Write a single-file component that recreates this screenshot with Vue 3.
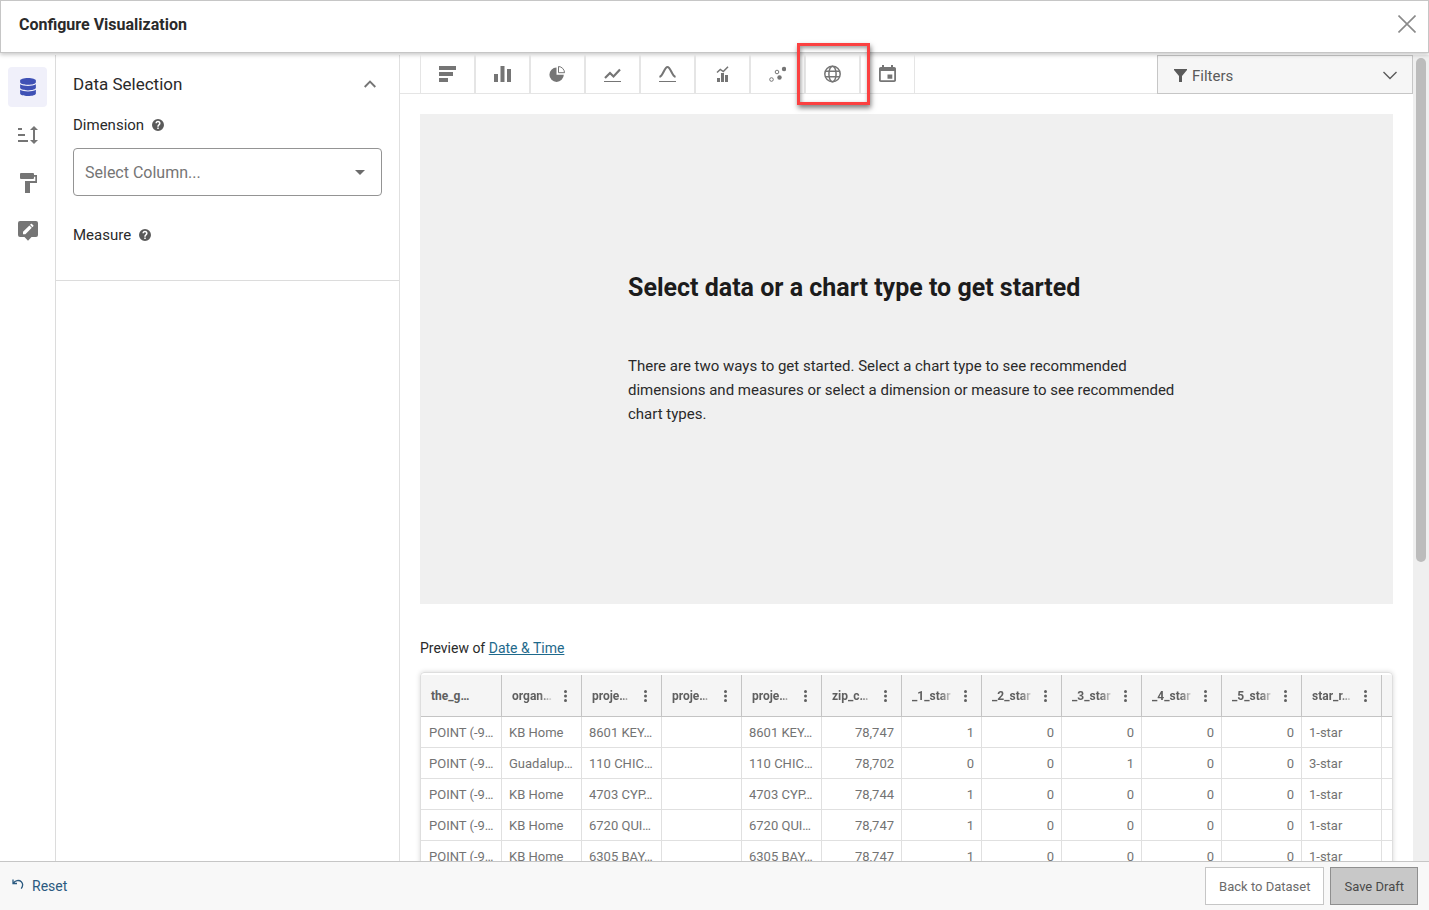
<script setup>
import { ref } from 'vue'

const column = ref('')

const railItems = [
  { id: 'data', label: 'Data Selection', active: true },
  { id: 'sort', label: 'Sort and limit' },
  { id: 'paint', label: 'Presentation' },
  { id: 'note', label: 'Annotations' }
]

const chartTypes = [
  { id: 'bar', label: 'Bar chart' },
  { id: 'column', label: 'Column chart' },
  { id: 'pie', label: 'Pie chart' },
  { id: 'line', label: 'Timeline chart' },
  { id: 'histogram', label: 'Histogram' },
  { id: 'combo', label: 'Combo chart' },
  { id: 'scatter', label: 'Scatter chart' },
  { id: 'map', label: 'Map' },
  { id: 'calendar', label: 'Calendar' }
]

const headers = ['the_g…', 'organ…', 'proje…', 'proje…', 'proje…', 'zip_c…', '_1_star', '_2_star', '_3_star', '_4_star', '_5_star', 'star_r…']

const rows = [
  ['POINT (-9…', 'KB Home', '8601 KEY…', '', '8601 KEY…', '78,747', '1', '0', '0', '0', '0', '1-star'],
  ['POINT (-9…', 'Guadalup…', '110 CHIC…', '', '110 CHIC…', '78,702', '0', '0', '1', '0', '0', '3-star'],
  ['POINT (-9…', 'KB Home', '4703 CYP…', '', '4703 CYP…', '78,744', '1', '0', '0', '0', '0', '1-star'],
  ['POINT (-9…', 'KB Home', '6720 QUI…', '', '6720 QUI…', '78,747', '1', '0', '0', '0', '0', '1-star'],
  ['POINT (-9…', 'KB Home', '6305 BAY…', '', '6305 BAY…', '78,747', '1', '0', '0', '0', '0', '1-star']
]

const isNumeric = (i) => i >= 5 && i <= 10
</script>

<template>
  <div class="shell">
    <header class="topbar">
      <h1>Configure Visualization</h1>
      <button class="close" type="button" aria-label="Close">
        <svg width="18" height="18" viewBox="0 0 18 18"><path d="M.5.5l17 17M17.5.5l-17 17" fill="none" stroke="#8a8a8a" stroke-width="1.6" /></svg>
      </button>
    </header>

    <div class="body">
      <nav class="rail" aria-label="Configuration sections">
        <button v-for="item in railItems" :key="item.id" type="button" class="rail-btn" :class="{ active: item.active }" :aria-label="item.label">
          <svg v-if="item.id === 'data'" width="16" height="18" viewBox="0 0 448 512"><path fill="#3f51b5" d="M448 73v46c0 40-100 73-224 73S0 159 0 119V73C0 33 100 0 224 0s224 33 224 73zM448 176v103c0 40-100 73-224 73S0 319 0 279V176c48 33 136 49 224 49s176-16 224-49zm0 160v103c0 40-100 73-224 73S0 479 0 439V336c48 33 136 49 224 49s176-16 224-49z" /></svg>
          <svg v-else-if="item.id === 'sort'" width="20" height="18" viewBox="0 0 20 18"><path fill="#757575" d="M0 2h4v2H0zM0 8h7v2H0zM0 14h10v2H0zM16 0l4 4h-3v10h3l-4 4-4-4h3V4h-3z" /></svg>
          <svg v-else-if="item.id === 'paint'" width="18" height="20" viewBox="0 0 18 20"><path fill="#757575" d="M2 0h12a1 1 0 0 1 1 1v1h3v8h-7v10H6V8h10.300V3.700H15V5a1 1 0 0 1-1 1H2a1 1 0 0 1-1-1V1a1 1 0 0 1 1-1z" /></svg>
          <svg v-else width="20" height="20" viewBox="0 0 20 20"><path fill="#757575" d="M2 0h16a2 2 0 0 1 2 2v12a2 2 0 0 1-2 2h-4.500L10 19.700 6.500 16H2a2 2 0 0 1-2-2V2a2 2 0 0 1 2-2z" /><path fill="#fff" d="M5 13.200v-2.400l6.400-6.400 2.400 2.400-6.400 6.400zM12 3.800l.9-.9c.3-.3.7-.3 1 0l1.400 1.400c.3.300.3.700 0 1l-.9.900z" /></svg>
        </button>
      </nav>

      <aside class="panel">
        <section class="section">
          <button class="section-head" type="button" aria-expanded="true">
            <span>Data Selection</span>
            <svg width="12" height="8" viewBox="0 0 12 8"><path d="M.7 7L6 1.700 11.300 7" fill="none" stroke="#757575" stroke-width="1.900" /></svg>
          </button>
          <div class="field-label">
            <label for="dimension">Dimension</label>
            <svg width="12" height="12" viewBox="0 0 24 24"><path fill="#5a5a5a" d="M12 0a12 12 0 1 0 0 24 12 12 0 0 0 0-24zm1.500 20h-3v-3h3zm2.600-8.700l-1.100 1.100c-1 1-1.500 1.600-1.500 3.100h-3v-.7c0-1.300.5-2.400 1.500-3.300l1.400-1.500c.4-.4.600-.9.600-1.400a2 2 0 0 0-4.200 0H6.900a5.100 5.100 0 0 1 10.200 0c0 1.100-.4 2-1 2.700z" /></svg>
          </div>
          <div class="select-wrap">
            <select id="dimension" v-model="column">
              <option value="">Select Column...</option>
            </select>
            <svg class="caret" width="10" height="5" viewBox="0 0 10 5"><path d="M0 0h10L5 5z" fill="#6b6b6b" /></svg>
          </div>
          <div class="field-label measure">
            <span>Measure</span>
            <svg width="12" height="12" viewBox="0 0 24 24"><path fill="#5a5a5a" d="M12 0a12 12 0 1 0 0 24 12 12 0 0 0 0-24zm1.500 20h-3v-3h3zm2.600-8.700l-1.100 1.100c-1 1-1.500 1.600-1.500 3.100h-3v-.7c0-1.300.5-2.400 1.500-3.300l1.400-1.500c.4-.4.600-.9.600-1.400a2 2 0 0 0-4.200 0H6.900a5.100 5.100 0 0 1 10.200 0c0 1.100-.4 2-1 2.700z" /></svg>
          </div>
        </section>
      </aside>

      <main class="main">
        <div class="toolbar">
          <div class="types">
            <button v-for="t in chartTypes" :key="t.id" type="button" class="type" :aria-label="t.label">
              <svg width="17" height="18" viewBox="0 0 17 18" fill="#757575">
                <path v-if="t.id === 'bar'" d="M0 1h17v4H0zM0 7h14v4H0zM0 13h9v4H0z" />
                <path v-else-if="t.id === 'column'" d="M0 9h4v8H0zM6.500 1h4v16h-4zM13 4h4v13h-4z" />
                <g v-else-if="t.id === 'pie'"><path d="M7.500 2.500A7.200 7.200 0 1 0 14.800 9.800H7.500z" /><path d="M9.500 1.500a6.300 6.300 0 0 1 6 6.200h-6z" fill="none" stroke="#757575" /></g>
                <g v-else-if="t.id === 'line'" fill="none" stroke="#757575"><path d="M1 13l5-5 3.500 3.500L16 4.500" stroke-width="2.200" /><path d="M0 16.500h17" /></g>
                <g v-else-if="t.id === 'histogram'" fill="none" stroke="#757575"><path d="M.5 12C4 11 5.500 2 8.500 2s4.500 9 8 10" stroke-width="2.200" /><path d="M0 16.500h17" /></g>
                <g v-else-if="t.id === 'combo'"><path d="M3 13h3v4H3zM7 8h3v9H7zM11 10h3v7h-3z" /><path d="M3 7.500L6.300 4.500l3 2L14 1.700" fill="none" stroke="#757575" stroke-width="1.500" /></g>
                <g v-else-if="t.id === 'scatter'"><circle cx="2.500" cy="14.500" r="1.800" fill="none" stroke="#757575" /><circle cx="8" cy="7" r="1.800" fill="none" stroke="#757575" /><circle cx="10.500" cy="12.500" r="2.200" /><circle cx="15" cy="4" r="2.200" /></g>
                <g v-else-if="t.id === 'map'" fill="none" stroke="#757575" stroke-width="1.500"><circle cx="8.500" cy="9" r="7.700" /><ellipse cx="8.500" cy="9" rx="3.600" ry="7.700" /><path d="M1.500 6.300h14M1.500 11.700h14" /></g>
                <path v-else fill-rule="evenodd" d="M15.200 2H14V0h-2v2H5V0H3v2H1.800C.8 2 0 2.800 0 3.700v11.600c0 .9.800 1.700 1.800 1.700h13.400c1 0 1.800-.8 1.800-1.700V3.700c0-.9-.8-1.700-1.800-1.700zM1.800 6h13.400v9.300H1.800zM8.500 9.500h4.800v4.200H8.500z" />
              </svg>
              <span v-if="t.id === 'map'" class="highlight"></span>
            </button>
          </div>
          <button class="filters" type="button">
            <svg width="13" height="13" viewBox="0 0 13 13"><path d="M0 0h13v1L8 7v6H5V7L0 1z" fill="#5a5a5a" /></svg>
            <span>Filters</span>
            <svg class="chev" width="14" height="9" viewBox="0 0 14 9"><path d="M.5 1L7 7.500 13.500 1" fill="none" stroke="#5a5a5a" stroke-width="1.400" /></svg>
          </button>
        </div>

        <div class="content">
          <section class="intro">
            <div class="intro-text">
              <h2>Select data or a chart type to get started</h2>
              <p>There are two ways to get started. Select a chart type to see recommended dimensions and measures or select a dimension or measure to see recommended chart types.</p>
            </div>
          </section>
          <p class="preview">Preview of <a href="#">Date &amp; Time</a></p>
          <div class="card">
            <table>
              <thead>
                <tr>
                  <th v-for="(h, i) in headers" :key="i" scope="col">
                    <div class="th">
                      <span :class="{ fade: i > 0 }">{{ h }}</span>
                      <svg v-if="i > 0" width="3" height="12" viewBox="0 0 3 12" fill="#5f5f5f"><circle cx="1.500" cy="1.500" r="1.500" /><circle cx="1.500" cy="6" r="1.500" /><circle cx="1.500" cy="10.500" r="1.500" /></svg>
                    </div>
                  </th>
                  <td class="rest"></td>
                </tr>
              </thead>
              <tbody>
                <tr v-for="(r, ri) in rows" :key="ri">
                  <td v-for="(c, ci) in r" :key="ci" :class="{ num: isNumeric(ci) }">{{ c }}</td>
                  <td class="rest"></td>
                </tr>
              </tbody>
            </table>
          </div>
        </div>
      </main>

      <div class="track"><div class="thumb"></div></div>
    </div>

    <footer class="footer">
      <button class="reset" type="button">
        <svg width="12" height="14" viewBox="0 0 12 14" fill="none" stroke="#2b5a80" stroke-width="1.300"><path d="M1 .500v4h4M1.300 4.300C3 1.500 7 .5 9.300 2.700c2 2 1.600 4.500-.1 7" /></svg>
        Reset
      </button>
      <div class="actions">
        <button class="btn" type="button">Back to Dataset</button>
        <button class="btn primary" type="button">Save Draft</button>
      </div>
    </footer>
  </div>
</template>

<style>
html,
body {
  margin: 0;
  background: #fff;
}
</style>

<style scoped>
* {
  box-sizing: border-box;
}
.shell {
  display: flex;
  flex-direction: column;
  height: 100vh;
  overflow: hidden;
  font-family: Roboto, "Liberation Sans", sans-serif;
  color: #2a2a2a;
}
button {
  font-family: inherit;
  color: inherit;
  background: none;
  border: 0;
  padding: 0;
  cursor: pointer;
}
svg {
  display: block;
  flex: none;
}
.topbar {
  display: flex;
  flex: none;
  align-items: center;
  justify-content: space-between;
  height: 53px;
  padding: 0 12px 4px 18px;
  border: 1px solid #c6c6c6;
  background: #fff;
  box-shadow: 0 2px 4px rgba(0, 0, 0, 0.2);
  position: relative;
}
.close {
  padding-bottom: 2px;
}
h1 {
  margin: 0;
  font-size: 16px;
  line-height: 24px;
  font-weight: 700;
}
.body {
  display: flex;
  flex: 1;
  min-height: 0;
  padding-top: 2px;
}
.rail {
  display: flex;
  flex: none;
  flex-direction: column;
  gap: 8px;
  width: 56px;
  padding: 12px 8px;
  border-right: 1px solid #dcdcdc;
}
.rail-btn {
  display: flex;
  align-items: center;
  justify-content: center;
  width: 100%;
  height: 40px;
  border-radius: 4px;
}
.rail-btn.active {
  background: #f0f0fa;
}
.panel {
  flex: none;
  width: 344px;
  border-right: 1px solid #e0e0e0;
}
.section {
  padding: 16px 17px 33px;
  border-bottom: 1px solid #dcdcdc;
}
.section-head {
  display: flex;
  align-items: center;
  justify-content: space-between;
  width: 100%;
  padding-right: 6px;
  font-size: 17px;
  line-height: 26px;
}
.field-label {
  display: flex;
  align-items: center;
  gap: 8px;
  margin-top: 16px;
  font-size: 15px;
  line-height: 24px;
}
.field-label.measure {
  margin-top: 27px;
}
.select-wrap {
  position: relative;
  margin-top: 11px;
}
select {
  appearance: none;
  display: block;
  width: 100%;
  height: 48px;
  padding: 0 11px;
  border: 1px solid #949494;
  border-radius: 4px;
  background: #fff;
  color: #757575;
  font-family: inherit;
  font-size: 16px;
}
.caret {
  position: absolute;
  right: 17px;
  top: 22px;
  pointer-events: none;
}
.main {
  display: flex;
  flex: 1;
  flex-direction: column;
  min-width: 0;
}
.toolbar {
  display: flex;
  flex: none;
  justify-content: space-between;
  height: 39px;
  padding-left: 20px;
  border-bottom: 1px solid #e5e5e5;
}
.types {
  display: flex;
}
.type {
  position: relative;
  display: flex;
  align-items: center;
  justify-content: center;
  width: 55px;
  height: 38px;
  border: solid #e5e5e5;
  border-width: 0 1px;
}
.highlight {
  position: absolute;
  z-index: 2;
  inset: -12px -11px -12px -9px;
  border: 3px solid #fb4141;
  box-shadow: 1px 3px 5px rgba(0, 0, 0, 0.5), inset 1px 2px 4px rgba(0, 0, 0, 0.4);
}
.filters {
  display: flex;
  align-items: center;
  gap: 5px;
  width: 256px;
  height: 39px;
  padding: 2px 15px 0 16px;
  border: 1px solid #c6c6c6;
  background: #f6f6f6;
  color: #5a5a5a;
  font-size: 15px;
}
.chev {
  margin-left: auto;
}
.content {
  flex: 1;
  min-height: 0;
  padding: 20px 20px 0;
  overflow: hidden;
}
.intro {
  display: flex;
  justify-content: center;
  height: 490px;
  padding-top: 156px;
  background: #f0f0f0;
}
.intro-text {
  width: 557px;
}
h2 {
  margin: 0;
  font-size: 25px;
  line-height: 36px;
  font-weight: 700;
  color: #1c1c1c;
}
.intro p {
  margin: 48px 0 0;
  font-size: 15px;
  line-height: 24px;
}
.preview {
  margin: 32px 0 12px;
  font-size: 14px;
  line-height: 24px;
}
.preview a {
  color: #1f6a8c;
}
.card {
  padding: 2px 0 0;
  border: 1px solid #dedede;
  border-radius: 4px;
  box-shadow: 0 0 5px rgba(0, 0, 0, 0.16);
}
table {
  width: 100%;
  table-layout: fixed;
  border-collapse: separate;
  border-spacing: 0;
  color: #737373;
  font-size: 13px;
}
th {
  width: 80px;
  height: 42px;
  padding: 0 14px 0 10px;
  border: solid #c4c4c4;
  border-width: 0 1px 1px 0;
  background: #f5f5f5;
  text-align: left;
  font-weight: 700;
  font-size: 12px;
  color: #5f5f5f;
}
th:first-child {
  width: 81px;
}
.th {
  display: flex;
  align-items: center;
  justify-content: space-between;
}
.fade {
  width: 41px;
  overflow: hidden;
  white-space: nowrap;
  mask-image: linear-gradient(to right, #000 28px, transparent 42px);
}
td {
  height: 31px;
  padding: 0 7px;
  overflow: hidden;
  white-space: nowrap;
  border: solid #e0e0e0;
  border-width: 0 1px 1px 0;
}
td:first-child {
  padding-left: 8px;
}
td.num {
  text-align: right;
}
td.rest {
  padding: 0;
  border-right: 0;
}
thead td.rest {
  border-bottom-color: #c4c4c4;
  background: #f5f5f5;
}
.track {
  flex: none;
  width: 16px;
  padding: 3px;
  background: #efefef;
}
.thumb {
  height: 63%;
  width: 10px;
  border-radius: 5px;
  background: #bcbcbc;
}
.footer {
  display: flex;
  flex: none;
  align-items: center;
  justify-content: space-between;
  position: relative;
  height: 49px;
  padding: 0 11px 0 12px;
  border-top: 1px solid #c6c6c6;
  background: #f8f8f8;
}
.reset {
  display: flex;
  align-items: center;
  gap: 8px;
  color: #2b5a80;
  font-size: 14px;
}
.actions {
  display: flex;
  gap: 6px;
}
.btn {
  height: 38px;
  padding: 0 13px;
  border: 1px solid #c6c6c6;
  background: #fff;
  color: #6b6b6b;
  font-size: 13px;
}
.btn.primary {
  background: #c8c8c8;
  border-color: #8f8f8f;
  color: #4a4a4a;
}
</style>
